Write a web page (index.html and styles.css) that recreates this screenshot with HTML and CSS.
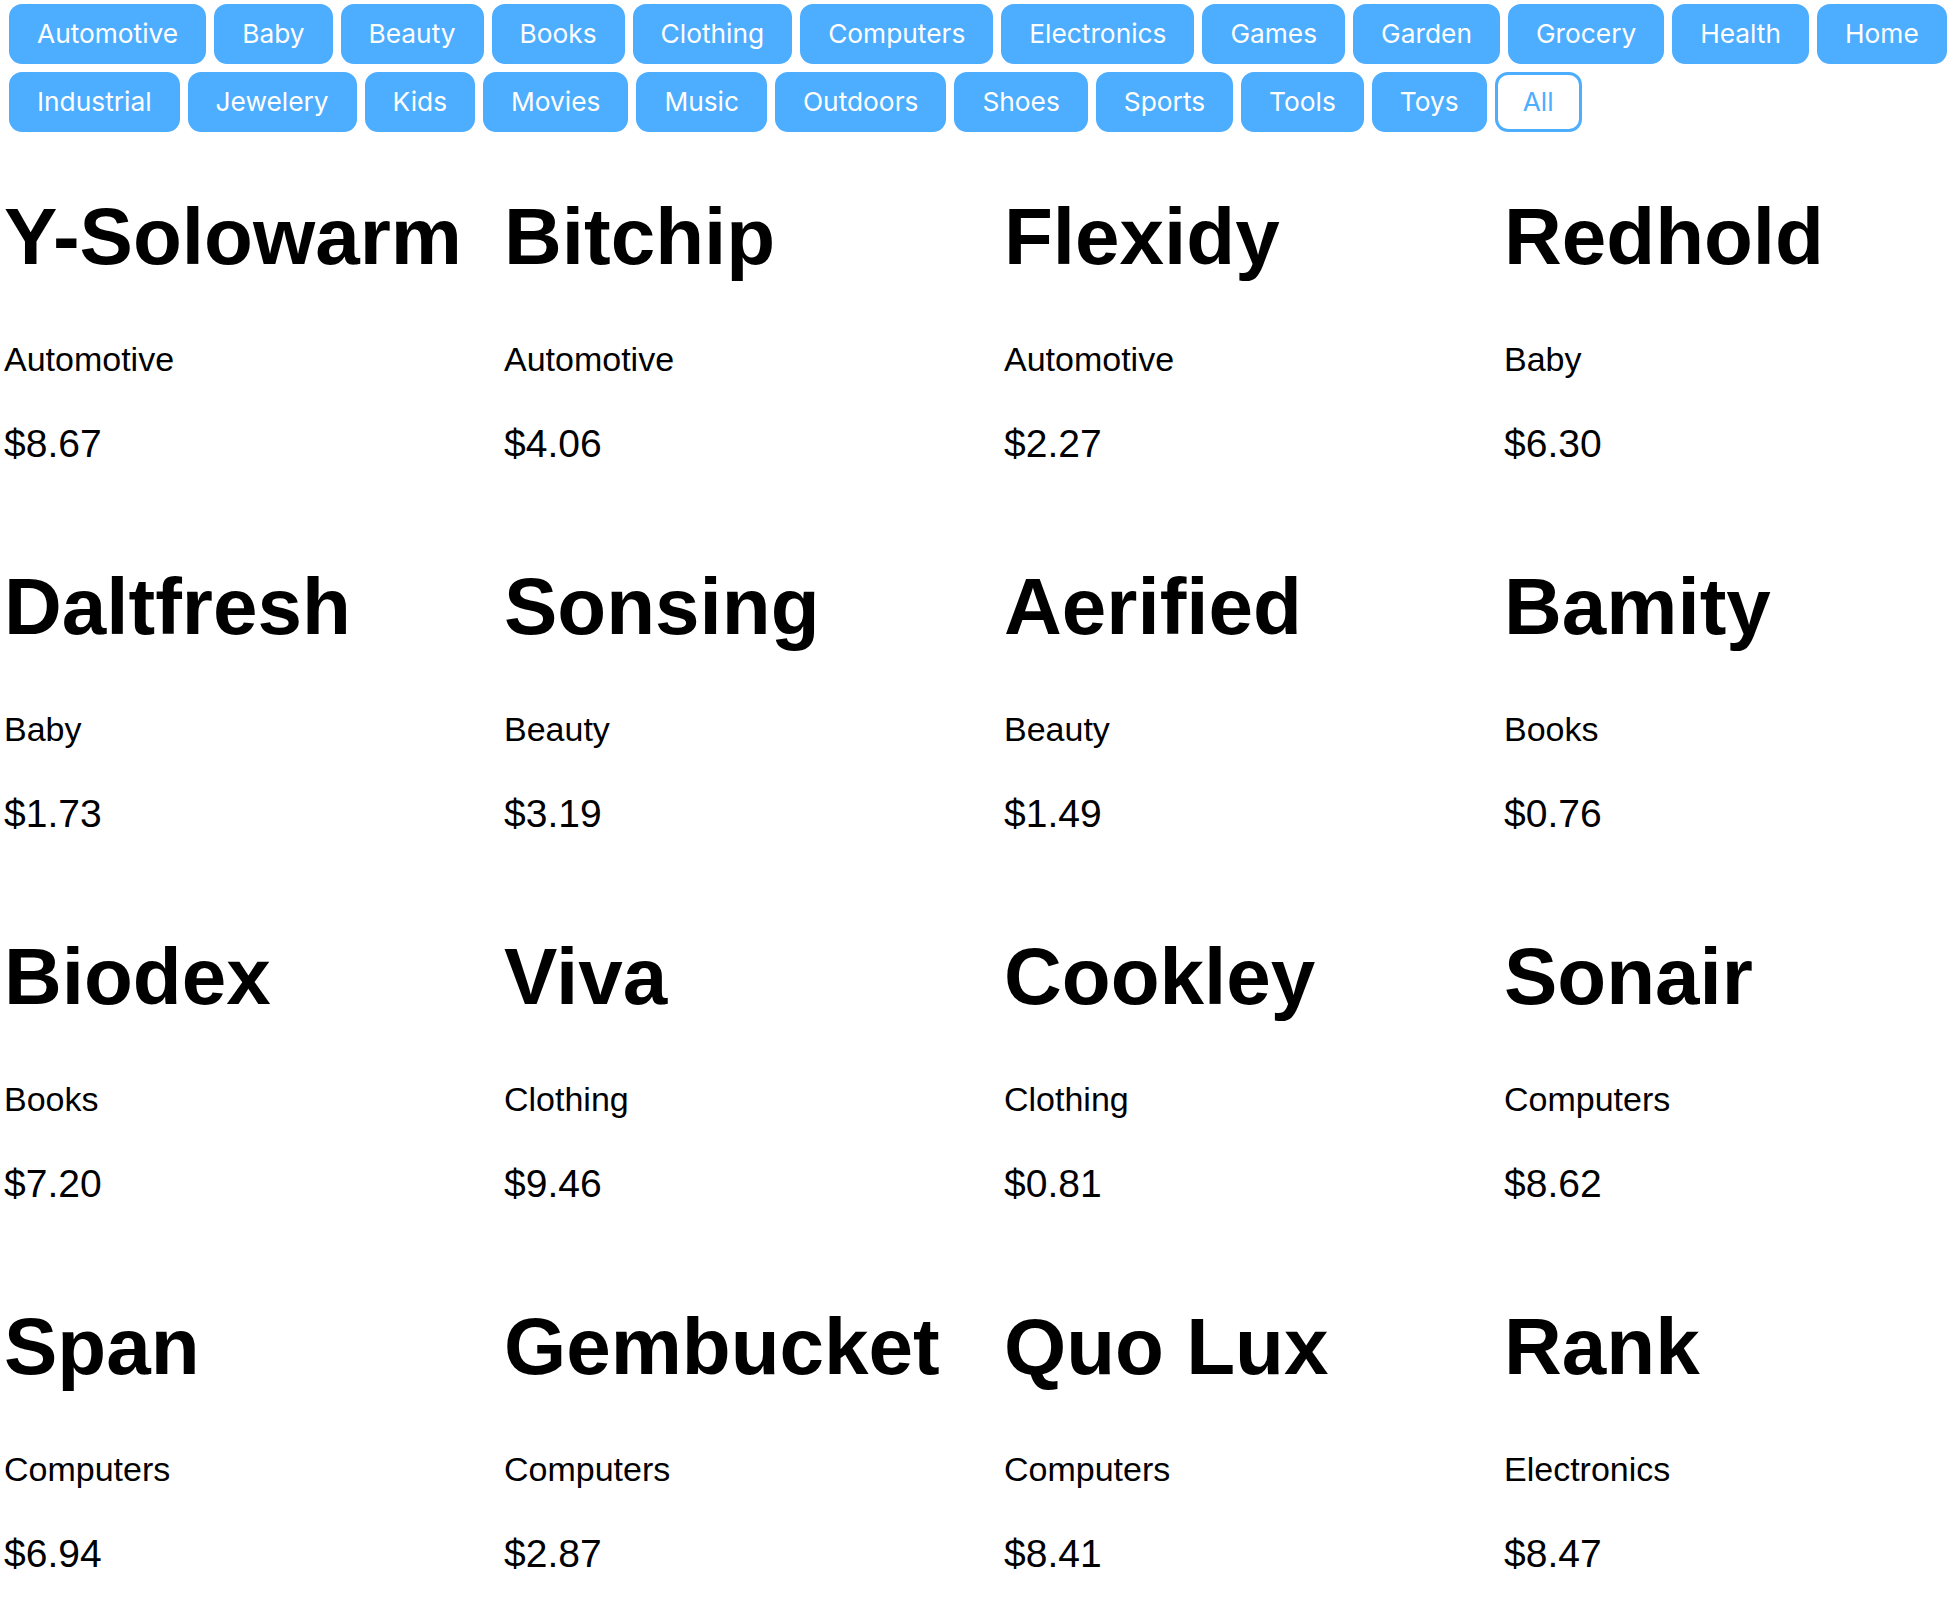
FILE: index.html
```html
<!DOCTYPE html>
<html lang="en">
<head>
<meta charset="utf-8">
<title>Products</title>
<link rel="stylesheet" href="styles.css">
</head>
<body>
<nav class="filters">
  <button class="chip">Automotive</button>
  <button class="chip">Baby</button>
  <button class="chip">Beauty</button>
  <button class="chip">Books</button>
  <button class="chip">Clothing</button>
  <button class="chip">Computers</button>
  <button class="chip">Electronics</button>
  <button class="chip">Games</button>
  <button class="chip">Garden</button>
  <button class="chip">Grocery</button>
  <button class="chip">Health</button>
  <button class="chip">Home</button>
  <button class="chip">Industrial</button>
  <button class="chip">Jewelery</button>
  <button class="chip">Kids</button>
  <button class="chip">Movies</button>
  <button class="chip">Music</button>
  <button class="chip">Outdoors</button>
  <button class="chip">Shoes</button>
  <button class="chip">Sports</button>
  <button class="chip">Tools</button>
  <button class="chip">Toys</button>
  <button class="chip chip-active">All</button>
</nav>
<main class="grid">
  <section class="card"><h1 class="name">Y-Solowarm</h1><p class="cat">Automotive</p><p class="price">$8.67</p></section>
  <section class="card"><h1 class="name">Bitchip</h1><p class="cat">Automotive</p><p class="price">$4.06</p></section>
  <section class="card"><h1 class="name">Flexidy</h1><p class="cat">Automotive</p><p class="price">$2.27</p></section>
  <section class="card"><h1 class="name">Redhold</h1><p class="cat">Baby</p><p class="price">$6.30</p></section>
  <section class="card"><h1 class="name">Daltfresh</h1><p class="cat">Baby</p><p class="price">$1.73</p></section>
  <section class="card"><h1 class="name">Sonsing</h1><p class="cat">Beauty</p><p class="price">$3.19</p></section>
  <section class="card"><h1 class="name">Aerified</h1><p class="cat">Beauty</p><p class="price">$1.49</p></section>
  <section class="card"><h1 class="name">Bamity</h1><p class="cat">Books</p><p class="price">$0.76</p></section>
  <section class="card"><h1 class="name">Biodex</h1><p class="cat">Books</p><p class="price">$7.20</p></section>
  <section class="card"><h1 class="name">Viva</h1><p class="cat">Clothing</p><p class="price">$9.46</p></section>
  <section class="card"><h1 class="name">Cookley</h1><p class="cat">Clothing</p><p class="price">$0.81</p></section>
  <section class="card"><h1 class="name">Sonair</h1><p class="cat">Computers</p><p class="price">$8.62</p></section>
  <section class="card"><h1 class="name">Span</h1><p class="cat">Computers</p><p class="price">$6.94</p></section>
  <section class="card"><h1 class="name">Gembucket</h1><p class="cat">Computers</p><p class="price">$2.87</p></section>
  <section class="card"><h1 class="name">Quo Lux</h1><p class="cat">Computers</p><p class="price">$8.41</p></section>
  <section class="card"><h1 class="name">Rank</h1><p class="cat">Electronics</p><p class="price">$8.47</p></section>
</main>
</body>
</html>
```
FILE: styles.css
```css
* { box-sizing: border-box; }

html, body {
  margin: 0;
  padding: 0;
  background: #ffffff;
  color: #000000;
  font-family: "Liberation Sans", Arial, Helvetica, sans-serif;
}

body { overflow-x: hidden; }

.filters {
  display: flex;
  flex-wrap: wrap;
  gap: 8px 8px;
  padding: 4px 0 0 9px;
}

.chip {
  font-family: Inter, "Noto Sans", sans-serif;
  font-size: 26.3px;
  font-weight: 400;
  line-height: 34px;
  color: #ffffff;
  background: #4dadff;
  border: 2px solid #4dadff;
  border-radius: 13px;
  padding: 11px 26px 11px;
  height: 60px;
  cursor: pointer;
}

.chip-active {
  background: #ffffff;
  color: #4dadff;
  border-width: 3px;
  padding: 10px 25px;
}

.grid {
  display: grid;
  grid-template-columns: 500px 500px 500px 1fr;
  row-gap: 95px;
  padding: 0 0 0 4px;
  margin-top: 59px;
}

.card { min-width: 0; }

.name {
  margin: 0 0 56px;
  font-size: 80px;
  line-height: 92px;
  font-weight: 700;
  white-space: nowrap;
}

.cat {
  margin: 0 0 42px;
  font-size: 34px;
  line-height: 40px;
}

.price {
  margin: 0;
  font-size: 39px;
  line-height: 45px;
}
```
